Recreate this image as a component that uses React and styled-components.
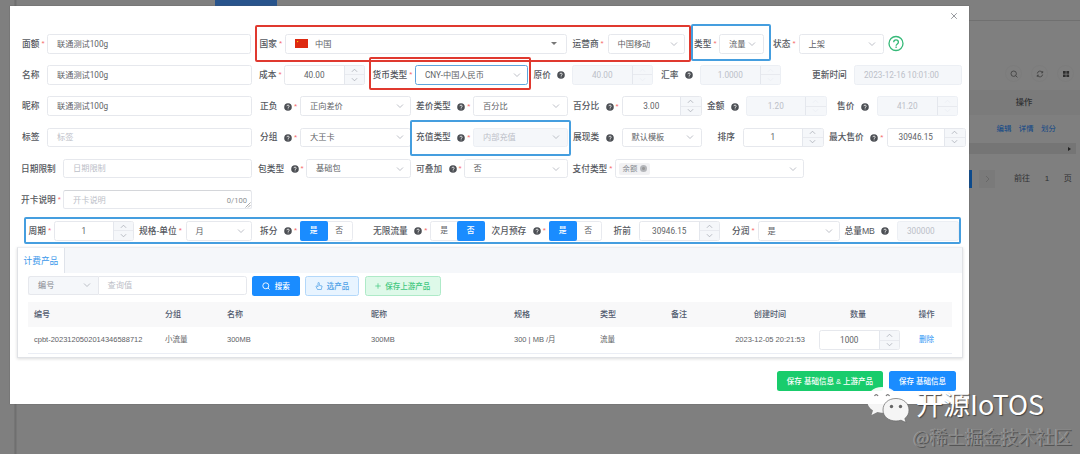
import React from 'react';
import styled, { createGlobalStyle, css } from 'styled-components';

const Global = createGlobalStyle`
  * { box-sizing: border-box; }
  html, body { margin: 0; height: 454px; overflow: hidden; background: #7f7f7f; }
  body {
    font-family: "Liberation Sans", "Noto Sans CJK SC", sans-serif;
    font-size: 8.1px;
    line-height: 1;
    color: #606266;
    white-space: nowrap;
  }
`;

/* ---------- page behind the dialog ---------- */
const Page = styled.div`
  position: relative;
  display: flex;
  width: 1080px;
  height: 454px;
  background: #7f7f7f;
`;
const SideBar = styled.div`
  width: 17px;
  background: linear-gradient(90deg, #7f7f7f 0 14px, #6b6b6b 15px, #7b7b7b 17px);
`;
const PageBody = styled.div`
  flex: 1;
  display: flex;
  flex-direction: column;
`;
const TopTabs = styled.div`
  height: 21px;
  padding-left: 198px;
  border-bottom: 1px solid #707070;
`;
const TopTab = styled.div`
  width: 62px;
  height: 6px;
  background: #28548c;
`;
const BackPanel = styled.div`
  width: 112px;
  margin-left: auto;
  display: flex;
  flex-direction: column;
  color: #303133;
`;
const IconRow = styled.div`
  display: flex;
  justify-content: flex-end;
  gap: 9px;
  padding: 44px 6px 0 0;
`;
const RoundIcon = styled.span`
  width: 17px;
  height: 17px;
  display: flex;
  align-items: center;
  justify-content: center;
  border: 1px solid #7c7c7c;
  border-radius: 50%;
`;
const BackHead = styled.div`
  margin-top: 8px;
  height: 25px;
  line-height: 25px;
  background: #7b7b7b;
  text-align: center;
  font-weight: 500;
  font-size: 8.3px;
`;
const BackLinks = styled.div`
  display: flex;
  gap: 7.5px;
  height: 28px;
  align-items: center;
  padding-left: 28.5px;
  font-size: 7.4px;
  color: #0e4688;
`;
const BackScroll = styled.div`
  display: flex;
  height: 11px;
  align-items: center;
  justify-content: flex-end;
  padding-right: 8px;
  margin-right: 4px;
  background: #757575;
`;
const Arrow = styled.i`
  border: 2.5px solid transparent;
  border-left: 3.5px solid #222;
  border-right: 0;
  margin-right: -3px;
`;
const Pager = styled.div`
  display: flex;
  align-items: center;
  margin-top: 16px;
  height: 18px;
`;
const PagerCurrent = styled.span`
  width: 4px;
  height: 18px;
  background: #0c4a8c;
`;
const PagerNext = styled.span`
  width: 16px;
  height: 18px;
  margin: 0 19px 0 7px;
  display: flex;
  align-items: center;
  justify-content: center;
  background: #7a7a7a;
`;
const PagerText = styled.span`
  margin-right: ${(p) => p.$gap || 0}px;
`;

/* ---------- dialog ---------- */
const Dialog = styled.div`
  position: absolute;
  left: 10px;
  top: 6px;
  width: 958.5px;
  height: 397.5px;
  background: #fff;
  box-shadow: 0 0 1px #555;
`;
const DialogHead = styled.div`
  display: flex;
  justify-content: flex-end;
  height: 28px;
  padding: 6px 11px 0 0;
`;
const Row = styled.div`
  display: flex;
  align-items: flex-start;
  height: 31.2px;
  padding-left: ${(p) => p.$pad || 12}px;
`;
const FieldBox = styled.div`
  display: flex;
  height: 19.5px;
  margin-left: ${(p) => p.$gap || 0}px;
`;
const Label = styled.label`
  flex: none;
  width: ${(p) => p.$w}px;
  display: flex;
  align-items: center;
  padding-top: 1px;
  font-size: 8.7px;
  font-weight: 500;
  color: #55585e;
`;
const Star = styled.span`
  margin-left: 2px;
  font-size: 8px;
  font-weight: 400;
  color: #f56c6c;
`;
const Control = styled.div`
  flex: none;
  display: flex;
  align-items: center;
  width: ${(p) => p.$w}px;
  height: 19.5px;
  padding: 0 ${(p) => (p.$select ? 6.5 : 4)}px 0 9px;
  border: 1px solid ${(p) => (p.$focus ? '#5fa5dd' : '#e6e8ed')};
  border-radius: 2.5px;
  background: #fff;
  font-family: Roboto, "Noto Sans CJK SC", sans-serif;
  font-size: 8.2px;
  color: #606266;
  ${(p) => p.$placeholder && css`color: #bcc0c8;`}
  ${(p) => p.$disabled && css`
    background: #f5f7fa;
    border-color: #eceff4;
    color: #bcc0c8;
  `}
`;
const Grow = styled.span`
  flex: 1;
`;
const NumberBox = styled(Control)`
  padding: 0;
  overflow: hidden;
`;
const NumberValue = styled.span`
  flex: 1;
  text-align: center;
`;
const Stepper = styled.span`
  width: 20.5px;
  height: 100%;
  display: flex;
  flex-direction: column;
  background: #f5f7fa;
  border-left: 1px solid #e4e7ed;
`;
const Step = styled.span`
  flex: 1;
  display: flex;
  align-items: center;
  justify-content: center;
  & + & { border-top: 1px solid #e8eaef; }
`;
const Flag = styled.span`
  width: 13px;
  height: 9px;
  margin-right: 7px;
  background: #de2910;
  display: flex;
`;
const Caret = styled.i`
  border: 3px solid transparent;
  border-top: 3.5px solid #777;
  border-bottom: 0;
  margin-right: 5px;
`;
const Tag = styled.span`
  display: flex;
  align-items: center;
  gap: 3px;
  height: 12px;
  margin-left: -6px;
  padding: 0 3px 0 4px;
  border-radius: 2px;
  background: #f1f1f3;
  color: #85888e;
  font-size: 7.4px;
`;
const TagClose = styled.i`
  width: 7px;
  height: 7px;
  border-radius: 50%;
  background: radial-gradient(#999 1px, #b4b6ba 2px);
`;
const TextArea = styled(Control)`
  position: relative;
  justify-content: space-between;
  border-top-color: #d4d6da;
`;
const Count = styled.span`
  color: #8c8f94;
  font-size: 7.6px;
  padding-top: 2px;
`;
const Grip = styled.svg`
  position: absolute;
  right: 0;
  bottom: 0;
`;
const Group = styled.div`
  display: flex;
  width: ${(p) => p.$w}px;
  height: 20px;
  border: 1px solid #e8eaef;
  border-radius: 2.5px;
`;
const GroupItem = styled.span`
  flex: 1;
  display: flex;
  align-items: center;
  justify-content: center;
  margin: -1px;
  font-size: 7.8px;
  ${(p) => p.$on && css`
    background: #1a8cff;
    color: #fff;
    border-radius: 2px;
    font-weight: 500;
  `}
`;
const PeriodRow = styled.div`
  display: flex;
  width: 937px;
  height: 27px;
  margin: -4.4px 0 0 14px;
  padding: 2.5px 0 0 2.5px;
  border: 2px solid #459edf;
  border-radius: 2px;
`;
const Mark = styled.div`
  position: absolute;
  left: ${(p) => p.$x}px;
  top: ${(p) => p.$y}px;
  width: ${(p) => p.$w}px;
  height: ${(p) => p.$h}px;
  border: 2px solid ${(p) => (p.$red ? '#e0392f' : '#459edf')};
  border-radius: 2px;
  pointer-events: none;
`;

/* ---------- product card ---------- */
const Card = styled.div`
  width: 946.5px;
  height: 111.5px;
  margin: 3px 0 0 6.5px;
  border: 1px solid #e0e2e6;
  border-top-color: #eceef2;
  box-shadow: 0 1px 3px rgba(0, 0, 0, 0.14);
  background: #fff;
`;
const TabBar = styled.div`
  height: 25px;
  background: #f5f7fa;
`;
const Tab = styled.div`
  width: 47.5px;
  height: 25px;
  padding: 0 0 0 6px;
  line-height: 26px;
  font-size: 8.7px;
  color: #3b97ea;
  background: #fff;
  border-right: 1px solid #dfe3ea;
`;
const ToolBar = styled.div`
  display: flex;
  height: 29.5px;
  padding: 3px 0 0 10.5px;
`;
const Prepend = styled(Control)`
  background: #f5f7fa;
  color: #85888e;
  border-right: 0;
  border-radius: 2.5px 0 0 2.5px;
`;
const SearchInput = styled(Control)`
  border-radius: 0 2.5px 2.5px 0;
`;
const tones = {
  blue: css`background: #1a8cff; color: #fff;`,
  green: css`background: #19cc6c; color: #fff;`,
  paleBlue: css`background: #e8f4ff; color: #4c9fe6; border: 1px solid #b3d8fa;`,
  paleGreen: css`background: #def9e9; color: #3fc77e; border: 1px solid #aeeac8;`,
};
const Button = styled.button`
  display: flex;
  flex: none;
  align-items: center;
  justify-content: center;
  gap: ${(p) => p.$space || 4}px;
  width: ${(p) => p.$w}px;
  height: 20px;
  margin: 0 0 0 ${(p) => p.$gap || 0}px;
  padding: 0;
  border: 0;
  border-radius: 2.5px;
  font: 500 7.5px "Liberation Sans", "Noto Sans CJK SC", sans-serif;
  ${(p) => tones[p.$tone]}
`;
const TableRow = styled.div`
  display: grid;
  grid-template-columns: 131px 62px 144px 143px 86px 71px 53px 92px 84px 53px;
  align-items: center;
  width: 924px;
  height: ${(p) => (p.$head ? 25 : 27)}px;
  margin-left: 10.5px;
  padding-left: 6px;
  font-size: 7.5px;
  border-bottom: 1px solid #ebeef5;
  ${(p) => p.$head && css`
    background: #f8f8f9;
    border-bottom: 0;
    font-size: 8.1px;
    font-weight: 500;
    color: #515a6e;
  `}
`;
const Cell = styled.span`
  text-align: ${(p) => (p.$center ? 'center' : 'left')};
`;
const QuantityCell = styled.span`
  display: flex;
  justify-content: flex-end;
`;
const DeleteLink = styled.a`
  color: #2b94f5;
  text-align: center;
`;
const Footer = styled.div`
  display: flex;
  justify-content: flex-end;
  gap: 6px;
  padding: 12.5px 12.5px 0 0;
`;

/* ---------- watermark ---------- */
const Brand = styled.div`
  position: absolute;
  left: 866px;
  top: 384px;
  display: flex;
  align-items: center;
  gap: 6px;
  height: 42px;
  font: 400 27px "Noto Sans CJK SC", sans-serif;
  color: #fff;
  text-shadow: 1px 1px 1px #444;
`;
const BrandText = styled.span`
  margin-top: -3px;
`;
const Community = styled.div`
  position: absolute;
  right: 8px;
  top: 424px;
  font: 400 17.8px/24px "Noto Sans CJK SC", sans-serif;
  color: #868686;
  text-shadow: 1px 1px 0 #555, -0.5px -0.5px 0 #acacac;
`;

const Chevron = ({ up, size = 8, color = '#b4b8c0' }) => (
  <svg width={size} height={size} viewBox="0 0 8 8" fill="none" stroke={color} strokeWidth="0.9">
    <path d={up ? 'M1 5.5 4 2.5 7 5.5' : 'M1 2.5 4 5.5 7 2.5'} />
  </svg>
);
const HelpDot = () => (
  <svg width="8" height="8" viewBox="0 0 8 8">
    <circle cx="4" cy="4" r="3.8" fill="#4c4f54" />
    <path d="M2.9 3.2c0-1.5 2.3-1.5 2.3 0 0 .8-1.1.8-1.1 1.7M4.1 5.5v.8" fill="none" stroke="#fff" strokeWidth=".8" />
  </svg>
);
const HelpSlot = styled.span`
  display: flex;
  margin: 0 0 0 6.5px;
`;

const Field = ({ gap, label, lw, help, req, children }) => (
  <FieldBox $gap={gap}>
    <Label $w={lw}>
      {label}
      {help && <HelpSlot><HelpDot /></HelpSlot>}
      {req && <Star>*</Star>}
    </Label>
    {children}
  </FieldBox>
);
const Input = ({ w, value, ...rest }) => <Control $w={w} {...rest}>{value}</Control>;
const Select = ({ w, value, ...rest }) => (
  <Control $w={w} $select {...rest}>
    {value}
    <Grow />
    <Chevron />
  </Control>
);
const NumberInput = ({ w, value, disabled }) => (
  <NumberBox $w={w} $disabled={disabled}>
    <NumberValue>{value}</NumberValue>
    <Stepper>
      <Step><Chevron up size={7} color={disabled ? '#eceef3' : '#a9adb5'} /></Step>
      <Step><Chevron size={7} color={disabled ? '#eceef3' : '#a9adb5'} /></Step>
    </Stepper>
  </NumberBox>
);
const YesNo = ({ w, yes }) => (
  <Group $w={w}>
    <GroupItem $on={yes}>是</GroupItem>
    <GroupItem $on={!yes}>否</GroupItem>
  </Group>
);

const WeChat = () => (
  <svg width="44" height="38" viewBox="0 0 44 38">
    <path d="M16 1C7 1 1 7 1 14c0 4.500 2.200 8 6 10.500L5.500 29l6-3c2 .5 5 1 8 .5C17 18 23 11 32 11.500 30 5 24 1 16 1z" fill="#fff" fillOpacity=".92" />
    <path d="M30 12.500c-8 0-13 5-13 11.500S22.500 35 30 35c1.800 0 3.400-.3 5-.8l5 2.300-1.200-4C41.600 30.400 43 27.500 43 24c0-6.500-5.500-11.500-13-11.500z" fill="#f5f5f5" stroke="#666" strokeWidth=".7" />
    <g fill="none" stroke="#777" strokeWidth="1.200">
      <path d="M8.500 10q1.600-2.600 3.600 0M20 10q1.600-2.600 3.600 0" />
    </g>
    <circle cx="25.500" cy="20.500" r="1.700" fill="#666" />
    <circle cx="34.500" cy="20.500" r="1.700" fill="#666" />
  </svg>
);

const Backdrop = () => (
  <>
    <SideBar />
    <PageBody>
      <TopTabs><TopTab /></TopTabs>
      <BackPanel>
        <IconRow>
          <RoundIcon>
            <svg width="8" height="8" viewBox="0 0 8 8" fill="none" stroke="#3c3c3c" strokeWidth=".8"><circle cx="3.700" cy="3.700" r="2.700" /><path d="m5.700 5.700 1.700 1.700" /></svg>
          </RoundIcon>
          <RoundIcon>
            <svg width="8" height="8" viewBox="0 0 8 8" fill="none" stroke="#3c3c3c" strokeWidth=".8"><path d="M1.300 3.500A2.800 2.800 0 0 1 6.500 2.500M6.700 1v1.800H5M6.700 4.500A2.800 2.800 0 0 1 1.500 5.500M1.300 7V5.200H3" /></svg>
          </RoundIcon>
          <RoundIcon>
            <svg width="8" height="8" viewBox="0 0 8 8" fill="#2e2e2e"><path d="M1 1h2.700v2.700H1zM4.400 1h2.700v2.700H4.400zM1 4.400h2.700v2.700H1zM4.400 4.400h2.700v2.700H4.400z" /></svg>
          </RoundIcon>
        </IconRow>
        <BackHead>操作</BackHead>
        <BackLinks><span>编辑</span><span>详情</span><span>划分</span></BackLinks>
        <BackScroll><Arrow /></BackScroll>
        <Pager>
          <PagerCurrent />
          <PagerNext>
            <svg width="7" height="8" viewBox="0 0 7 8" fill="none" stroke="#666" strokeWidth=".9"><path d="m2 1 3 3-3 3" /></svg>
          </PagerNext>
          <PagerText $gap={14.5}>前往</PagerText>
          <PagerText $gap={14.5}>1</PagerText>
          <PagerText>页</PagerText>
        </Pager>
      </BackPanel>
    </PageBody>
  </>
);

const columns = ['编号', '分组', '名称', '昵称', '规格', '类型', '备注', '创建时间', '数量', '操作'];

export default function App() {
  return (
    <Page>
      <Global />
      <Backdrop />
      <Dialog>
        <DialogHead>
          <svg width="8" height="8" viewBox="0 0 8 8" stroke="#8c8f94" strokeWidth=".9"><path d="m1.200 1.200 5.600 5.600M6.800 1.200 1.200 6.800" /></svg>
        </DialogHead>

        <Row>
          <Field label="面额" lw={25} req><Input w={204} value="联通测试100g" /></Field>
          <Field gap={8.5} label="国家" lw={25.5} req>
            <Control $w={281.5}><Flag><svg width="13" height="9" viewBox="0 0 13 9" fill="#ffde00"><circle cx="2.600" cy="2.600" r=".7" /></svg></Flag>中国<Grow /><Caret /></Control>
          </Field>
          <Field gap={6} label="运营商" lw={35} req><Select w={77.5} value="中国移动" /></Field>
          <Field gap={9} label="类型" lw={25} req><Select w={44.5} value="流量" /></Field>
          <Field gap={9.5} label="状态" lw={25.5} req><Select w={85} value="上架" /></Field>
          <FieldBox $gap={4}>
            <svg width="16" height="19" viewBox="0 0 16 19" fill="none" stroke="#35b978" strokeWidth="1.300">
              <circle cx="8" cy="9.500" r="7" />
              <path d="M5.700 8.200c0-3.200 4.700-3.200 4.700 0 0 1.700-2.300 1.700-2.300 3.500M8.100 12.600v1.300" />
            </svg>
          </FieldBox>
        </Row>

        <Row>
          <Field label="名称" lw={25}><Input w={205} value="联通测试100g" /></Field>
          <Field gap={7} label="成本" lw={25} req><NumberInput w={81} value="40.00" /></Field>
          <Field gap={7.5} label="货币类型" lw={42.5} req><Select w={113} value="CNY-中国人民币" $focus /></Field>
          <Field gap={5.5} label="原价" lw={38.5} help><NumberInput w={81} value="40.00" disabled /></Field>
          <Field gap={8} label="汇率" lw={39} help><NumberInput w={81} value="1.0000" disabled /></Field>
          <Field gap={31} label="更新时间" lw={42}><Input w={108} value="2023-12-16 10:01:00" $disabled /></Field>
        </Row>

        <Row>
          <Field label="昵称" lw={25}><Input w={205} value="联通测试100g" /></Field>
          <Field gap={8} label="正负" lw={40} help req><Select w={111} value="正向差价" /></Field>
          <Field gap={5} label="差价类型" lw={57} help req><Select w={94.5} value="百分比" /></Field>
          <Field gap={5.5} label="百分比" lw={48.5} help req><NumberInput w={80} value="3.00" /></Field>
          <Field gap={5.5} label="金额" lw={38.5} help><NumberInput w={81} value="1.20" disabled /></Field>
          <Field gap={10.5} label="售价" lw={40} help><NumberInput w={81} value="41.20" disabled /></Field>
        </Row>

        <Row>
          <Field label="标签" lw={25}><Input w={205} value="标签" $placeholder /></Field>
          <Field gap={8} label="分组" lw={40} help req><Select w={111} value="大王卡" /></Field>
          <Field gap={5} label="充值类型" lw={57} help req><Select w={94.5} value="内部充值" $disabled /></Field>
          <Field gap={5.5} label="展现类" lw={48.5} help><Select w={80} value="默认模板" /></Field>
          <Field gap={16} label="排序" lw={25}><NumberInput w={81} value="1" /></Field>
          <Field gap={5.5} label="最大售价" lw={57.5} help req><NumberInput w={79} value="30946.15" /></Field>
        </Row>

        <Row $pad={11}>
          <Field label="日期限制" lw={42}><Input w={189} value="日期限制" $placeholder /></Field>
          <Field gap={6} label="包类型" lw={48} help req><Select w={105} value="基础包" /></Field>
          <Field gap={5} label="可叠加" lw={47.5} help req><Select w={104} value="否" /></Field>
          <Field gap={5} label="支付类型" lw={42} req>
            <Select w={189.5} value={<Tag>余额<TagClose /></Tag>} />
          </Field>
        </Row>

        <Row $pad={11}>
          <Field label="开卡说明" lw={42} req>
            <TextArea $w={189} $placeholder>
              开卡说明
              <Count>0/100</Count>
              <Grip width="6" height="6" viewBox="0 0 6 6" stroke="#888" strokeWidth=".7"><path d="M0.500 5.500 5.500.5M3 5.500 5.500 3" /></Grip>
            </TextArea>
          </Field>
        </Row>

        <PeriodRow>
          <Field label="周期" lw={25.5} req><NumberInput w={80} value="1" /></Field>
          <Field gap={5} label="规格-单位" lw={46.5} req><Select w={66.5} value="月" /></Field>
          <Field gap={8} label="拆分" lw={40} help req><YesNo w={53} yes /></Field>
          <Field gap={20} label="无限流量" lw={57} help req><YesNo w={55} /></Field>
          <Field gap={6.5} label="次月预存" lw={57.5} help req><YesNo w={53} yes /></Field>
          <Field gap={11.5} label="折前" lw={25.5}><NumberInput w={81} value="30946.15" /></Field>
          <Field gap={12} label="分润" lw={25.5} req><Select w={82.5} value="是" /></Field>
          <Field gap={4.5} label="总量MB" lw={52.5} help><Input w={61.5} value="300000" $disabled /></Field>
        </PeriodRow>

        <Card>
          <TabBar><Tab>计费产品</Tab></TabBar>
          <ToolBar>
            <Prepend $w={69.5} $select>编号<Grow /><Chevron /></Prepend>
            <SearchInput $w={149} $placeholder>查询值</SearchInput>
            <Button $w={47.5} $gap={5.5} $tone="blue" $space={5}>
              <svg width="8" height="8" viewBox="0 0 8 8" fill="none" stroke="currentColor" strokeWidth=".9"><circle cx="3.800" cy="3.800" r="3" /><path d="m6 6 1.500 1.500" /></svg>
              搜索
            </Button>
            <Button $w={54} $gap={5.5} $tone="paleBlue">
              <svg width="8" height="8" viewBox="0 0 8 8" fill="none" stroke="currentColor" strokeWidth=".7"><path d="M2.500 7.500h3.800l.8-3.500-2.800-.6V1.200c0-1-1.300-1-1.300 0v3.600l-1-.8c-.7-.4-1.200.3-.8.9z" /></svg>
              选产品
            </Button>
            <Button $w={76.5} $gap={5.5} $tone="paleGreen">
              <svg width="6" height="6" viewBox="0 0 6 6" stroke="currentColor" strokeWidth=".7"><path d="M3 .3v5.400M.3 3h5.400" /></svg>
              保存上游产品
            </Button>
          </ToolBar>
          <TableRow $head>
            {columns.map((c, i) => <Cell key={c} $center={i > 6}>{c}</Cell>)}
          </TableRow>
          <TableRow>
            <Cell>cpbt-2023120502014346588712</Cell>
            <Cell>小流量</Cell>
            <Cell>300MB</Cell>
            <Cell>300MB</Cell>
            <Cell>300 | MB /月</Cell>
            <Cell>流量</Cell>
            <Cell />
            <Cell $center>2023-12-05 20:21:53</Cell>
            <QuantityCell><NumberInput w={81} value="1000" /></QuantityCell>
            <DeleteLink>删除</DeleteLink>
          </TableRow>
        </Card>

        <Footer>
          <Button $w={106} $tone="green">保存 基础信息 &amp; 上游产品</Button>
          <Button $w={67} $tone="blue">保存 基础信息</Button>
        </Footer>
      </Dialog>

      <Mark $red $x={255} $y={25} $w={435.5} $h={36.500} />
      <Mark $x={691} $y={23.500} $w={79.500} $h={37} />
      <Mark $red $x={369} $y={57} $w={162} $h={32.500} />
      <Mark $x={410} $y={120} $w={161} $h={36} />

      <Brand><WeChat /><BrandText>开源IoTOS</BrandText></Brand>
      <Community>@稀土掘金技术社区</Community>
    </Page>
  );
}
